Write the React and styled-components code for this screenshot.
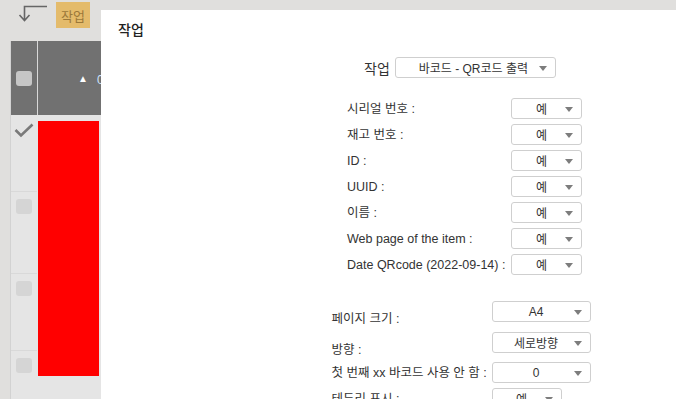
import React from 'react';
import styled, { createGlobalStyle } from 'styled-components';

const GlobalStyle = createGlobalStyle`
html, body {
  margin: 0;
  padding: 0;
  background: #e0dfdd;
  overflow: hidden;
  font-family: "Liberation Sans", "Noto Sans CJK KR", sans-serif;
}
`

const Page = styled.div`
position: relative;
height: 100vh;
display: flex;
flex-direction: column;
`
const Toolbar = styled.div`
height: 41px;
flex-shrink: 0;
display: flex;
align-items: flex-start;
padding-left: 18px;
gap: 8px;
box-sizing: border-box;
`
const BackIcon = styled.svg`
margin-top: 5px;
`
const ActionButton = styled.button`
margin-top: 2px;
width: 34px;
height: 26px;
background: #e4bb6b;
color: #9b7839;
border: none;
padding: 0;
font-family: "Noto Sans CJK KR", sans-serif;
font-size: 13px;
`
const Table = styled.div`
margin-left: 10px;
width: 90px;
flex: 1;
min-height: 0;
border-left: 1px solid #d2d2d2;
display: flex;
flex-direction: column;
`
const HeaderRow = styled.div`
height: 74px;
flex-shrink: 0;
background: #717171;
display: flex;
`
const CheckCell = styled.div`
width: 26px;
border-right: 1px solid ${p => p.$header ? '#d8d8d8' : 'transparent'};
display: flex;
justify-content: center;
align-items: ${p => p.$header ? 'center' : 'flex-start'};
`
const Box = styled.div`
width: 16px;
height: 15px;
border-radius: 3px;
background: ${p => p.$header ? '#c6c6c6' : '#d5d5d5'};
margin-top: ${p => p.$header ? '0' : '7px'};
`
const HeaderLabel = styled.div`
flex: 1;
display: flex;
align-items: center;
padding-left: 40px;
color: #fff;
font-size: 12px;
white-space: nowrap;
overflow: hidden;
gap: 9px;
`
const Arrow = styled.span`
font-size: 10px;
`
const Body = styled.div`
flex: 1;
display: flex;
background: #e5e5e5;
`
const CheckColumn = styled.div`
width: 26px;
display: flex;
flex-direction: column;
`
const BodyRow = styled.div`
height: ${p => p.$h}px;
flex-shrink: 0;
border-bottom: 1px solid #d9d9d9;
display: flex;
justify-content: center;
box-sizing: border-box;
`
const CheckIcon = styled.svg`
margin-top: 8px;
`
const ImageColumn = styled.div`
padding: 6px 0 0 1px;
`
const RedBlock = styled.div`
width: 61px;
height: 255px;
background: #ff0000;
`

const Dialog = styled.div`
position: absolute;
left: 101px;
top: 10px;
bottom: 0;
width: 720px;
background: #fff;
`
const Title = styled.div`
height: 29px;
padding: 9px 0 0 17px;
box-sizing: content-box;
font-family: "Noto Sans CJK KR", sans-serif;
font-size: 14px;
font-weight: 500;
line-height: 20px;
color: #222;
`
const Form = styled.div`
display: flex;
flex-direction: column;
align-items: center;
`
const TaskRow = styled.div`
margin-top: 9px;
display: flex;
align-items: center;
gap: 5px;
margin-left: -2px;
`
const TaskLabel = styled.span`
font-family: "Noto Sans CJK KR", sans-serif;
font-size: 14px;
color: #333;
`
const Group = styled.div`
margin-top: ${p => p.$top}px;
margin-left: ${p => p.$shift || 0}px;
display: flex;
flex-direction: column;
gap: ${p => p.$gap || 0}px;
`
const Row = styled.div`
display: flex;
align-items: flex-start;
height: ${p => p.$h}px;
`
const Label = styled.div`
width: ${p => p.$w}px;
padding-top: ${p => p.$offset}px;
line-height: 14px;
font-size: 12.5px;
color: #333;
white-space: nowrap;
`
const Select = styled.div`
position: relative;
width: ${p => p.$w}px;
height: 21px;
box-sizing: border-box;
border: 1px solid #cfcfcf;
border-radius: 3px;
background: #fff;
padding: 0 22px 0 ${p => p.$pl || 12}px;
display: flex;
align-items: center;
justify-content: center;
font-size: 12px;
color: #333;
white-space: nowrap;
`
const Caret = styled.span`
position: absolute;
right: 8px;
top: 8px;
border-left: 4px solid transparent;
border-right: 4px solid transparent;
border-top: 5px solid #7d7d7d;
`

const fields = ['시리얼 번호 :', '재고 번호 :', 'ID :', 'UUID :', '이름 :', 'Web page of the item :', 'Date QRcode (2022-09-14) :'];

const pageOptions = [
  { label: '페이지 크기 :', value: 'A4', h: 31, offset: 11, w: 99 },
  { label: '방향 :', value: '세로방향', h: 30, offset: 11, w: 99 },
  { label: '첫 번째 xx 바코드 사용 안 함 :', value: '0', h: 26, offset: 4, w: 99 },
  { label: '테두리 표시 :', value: '예', h: 26, offset: 4, w: 70 },
];

const Dropdown = ({ w, pl, children }) => (
  <Select $w={w} $pl={pl}>
    {children}
    <Caret />
  </Select>
);

const App = () => {
  return (
    <Page>
      <GlobalStyle />
      <Toolbar>
        <BackIcon width="30" height="18" viewBox="0 0 30 18">
          <path d="M29 1.5 H6.5 V15.5 M1.5 10 L6.5 15.5 L11.5 10" fill="none" stroke="#666" strokeWidth="1.6" />
        </BackIcon>
        <ActionButton>작업</ActionButton>
      </Toolbar>
      <Table>
        <HeaderRow>
          <CheckCell $header><Box $header /></CheckCell>
          <HeaderLabel><Arrow>▲</Arrow><span style={{ color: '#cde3ff' }}>0바코드</span></HeaderLabel>
        </HeaderRow>
        <Body>
          <CheckColumn>
            <BodyRow $h={77}>
              <CheckIcon width="20" height="15" viewBox="0 0 20 15">
                <path d="M1.5 7 L7 12.5 L18.5 1.5" fill="none" stroke="#7a7a7a" strokeWidth="2.6" />
              </CheckIcon>
            </BodyRow>
            <BodyRow $h={82}><Box /></BodyRow>
            <BodyRow $h={77}><Box /></BodyRow>
            <BodyRow $h={80}><Box /></BodyRow>
          </CheckColumn>
          <ImageColumn><RedBlock /></ImageColumn>
        </Body>
      </Table>

      <Dialog>
        <Title>작업</Title>
        <Form>
          <TaskRow>
            <TaskLabel>작업</TaskLabel>
            <Dropdown w={161} pl={18}>바코드 - QR코드 출력</Dropdown>
          </TaskRow>
          <Group $top={20} $gap={5} $shift={7}>
            {fields.map(f => (
              <Row key={f} $h={21}>
                <Label $w={164} $offset={4}>{f}</Label>
                <Dropdown w={71}>예</Dropdown>
              </Row>
            ))}
          </Group>
          <Group $top={26}>
            {pageOptions.map(o => (
              <Row key={o.label} $h={o.h}>
                <Label $w={160} $offset={o.offset}>{o.label}</Label>
                <Dropdown w={o.w}>{o.value}</Dropdown>
              </Row>
            ))}
          </Group>
        </Form>
      </Dialog>
    </Page>
  )
}

export default App
